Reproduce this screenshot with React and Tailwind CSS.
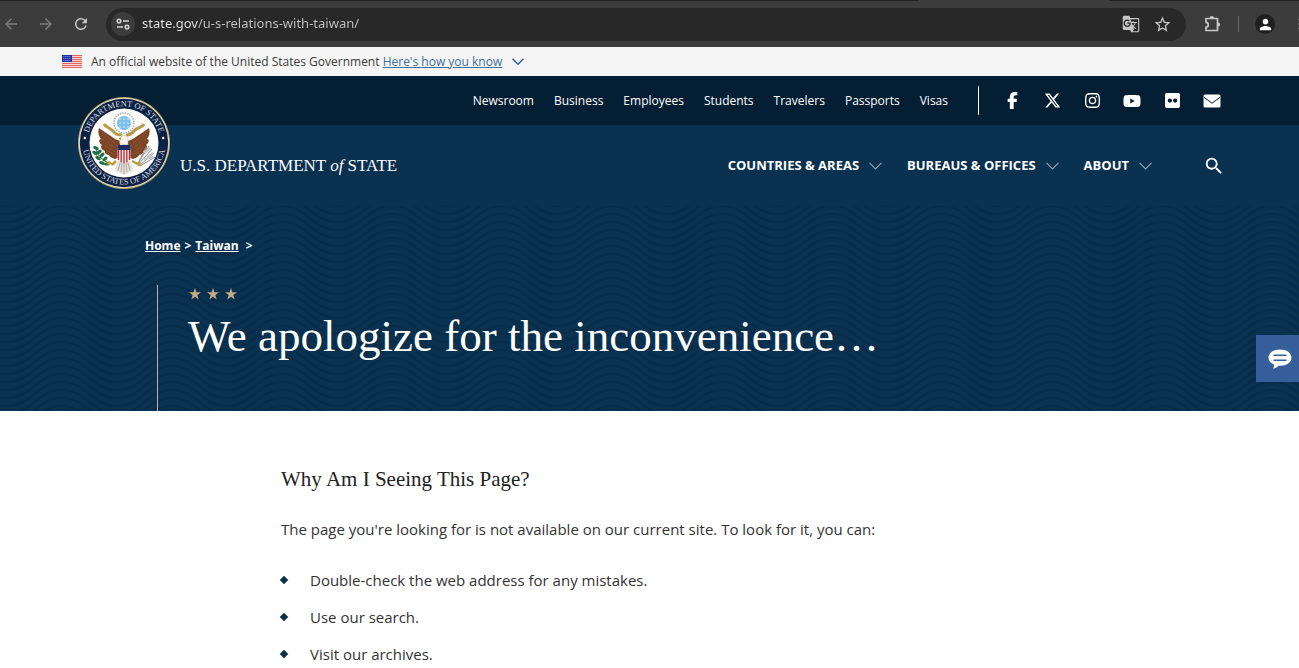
import { FaFacebookF, FaFlickr, FaInstagram, FaXTwitter, FaYoutube } from 'react-icons/fa6'
import {
  MdArrowBack,
  MdArrowForward,
  MdGTranslate,
  MdMoreVert,
  MdOutlineStarBorder,
  MdPerson,
  MdRefresh,
  MdSearch,
} from 'react-icons/md'

const TOP_LINKS = ['Newsroom', 'Business', 'Employees', 'Students', 'Travelers', 'Passports', 'Visas']

const SOCIAL_LINKS = [
  { name: 'Facebook', icon: <FaFacebookF size={17} /> },
  { name: 'X', icon: <FaXTwitter size={17} /> },
  { name: 'Instagram', icon: <FaInstagram size={17} /> },
  { name: 'YouTube', icon: <FaYoutube size={18} /> },
  { name: 'Flickr', icon: <FaFlickr size={17} /> },
  { name: 'Email', icon: <MailIcon /> },
]

const MAIN_MENU = ['Countries & Areas', 'Bureaus & Offices', 'About']

const TIPS = ['Double-check the web address for any mistakes.', 'Use our search.', 'Visit our archives.']

function MailIcon() {
  return (
    <svg width="18" height="14" viewBox="0 0 18 14" aria-hidden="true">
      <rect x="0.5" y="0.5" width="17" height="13" rx="1.5" fill="#fff" />
      <path d="M0.5 3 L9 9.2 L17.5 3" fill="none" stroke="#041e34" strokeWidth="1" />
    </svg>
  )
}

function Chevron({ className, width, height, strokeWidth }) {
  return (
    <svg
      className={className}
      width={width}
      height={height}
      viewBox="0 0 12 7"
      fill="none"
      stroke="currentColor"
      strokeWidth={strokeWidth}
      aria-hidden="true"
    >
      <path d="M0.5 0.7 L6 6.2 L11.5 0.7" />
    </svg>
  )
}

function StarIcon() {
  return (
    <svg width="12" height="12" viewBox="0 0 12 12" fill="currentColor" aria-hidden="true">
      <path d="M6 0 L7.4 4.3 H12 L8.3 7 L9.7 11.4 L6 8.7 L2.3 11.4 L3.7 7 L0 4.3 H4.6 Z" />
    </svg>
  )
}

function TuneIcon() {
  return (
    <svg width="14" height="14" viewBox="0 0 14 14" fill="none" stroke="#d6d6d6" strokeWidth="1.5" aria-hidden="true">
      <circle cx="3" cy="4" r="1.8" />
      <path d="M7 4 H13" />
      <circle cx="11" cy="10" r="1.8" />
      <path d="M1 10 H7" />
    </svg>
  )
}

function PuzzleIcon() {
  return (
    <svg width="20" height="18" viewBox="0 0 20 18" aria-hidden="true">
      <path
        d="M4 3.5 H15.5 V15.5 H4 V12 C7 12 7 7.3 4 7.3 Z"
        fill="none"
        stroke="currentColor"
        strokeWidth="1.7"
        strokeLinejoin="round"
      />
      <path d="M7.7 3.2 A2.1 2.1 0 0 1 11.9 3.2 Z M16 7.4 A2.1 2.1 0 0 1 16 11.7 Z" fill="currentColor" />
    </svg>
  )
}

function FlagIcon() {
  return (
    <svg width="20" height="13" viewBox="0 0 20 13" aria-hidden="true">
      <rect width="20" height="13" fill="#f6d9d4" />
      {[0, 2, 4, 6, 8, 10, 12].map((y) => (
        <rect key={y} y={y} width="20" height="1" fill="#e0665c" />
      ))}
      <rect width="10" height="7" fill="#1d33b0" />
      {[1, 3, 5].map((y) =>
        [1, 3, 5, 7].map((x) => <rect key={`${x}-${y}`} x={x + 0.5} y={y} width="0.8" height="0.8" fill="#c3cbf2" />),
      )}
    </svg>
  )
}

function Seal() {
  return (
    <svg width="92" height="92" viewBox="0 0 92 92" role="img" aria-label="Department of State seal">
      <defs>
        <path id="seal-top" d="M 9.5 46 A 36.5 36.5 0 0 1 82.5 46" />
        <path id="seal-bottom" d="M 4.5 46 A 41.5 41.5 0 0 0 87.5 46" />
      </defs>
      <circle cx="46" cy="46" r="46" fill="#b9ad72" />
      <circle cx="46" cy="46" r="45" fill="#f0ebcf" />
      <circle cx="46" cy="46" r="44.2" fill="#0d2143" />
      <circle cx="46" cy="46" r="34.5" fill="#fdfdfb" />
      <g fill="#d5d9e0" fontFamily="'Liberation Serif', serif" fontSize="8.4">
        <text textAnchor="middle">
          <textPath href="#seal-top" startOffset="50%">DEPARTMENT OF STATE</textPath>
        </text>
        <text textAnchor="middle">
          <textPath href="#seal-bottom" startOffset="50%">UNITED STATES OF AMERICA</textPath>
        </text>
      </g>
      <circle cx="6.8" cy="41" r="1.2" fill="#fff" />
      <circle cx="85.2" cy="41" r="1.2" fill="#fff" />

      {/* glory of clouds and stars */}
      <circle cx="46" cy="26" r="10" fill="#fff" stroke="#a9adb2" strokeWidth="1.6" strokeDasharray="1.5 1" />
      <circle cx="46" cy="26" r="7" fill="#79bfe6" />
      {[22, 26, 30].map((y) =>
        [42, 46, 50].map((x) => <circle key={`${x}-${y}`} cx={x} cy={y} r="0.8" fill="#e8f6ff" />),
      )}

      {/* ribbon */}
      <path
        d="M26 27 C28 31 34 31 37 36 C39 39 42 37 44 38 M66 27 C64 31 59 30 56 34 C53 38 50 38 48 38"
        fill="none"
        stroke="#b99a45"
        strokeWidth="3"
      />

      {/* wings */}
      <path
        d="M21 31 C26 35 32 38 37 42 L42 44 L42 60 L37 62 C33 61 31 59 31 58 C28 58 26 55 27 54 C23 53 22 49 24 48 C20 45 21 42 23 42 C20 38 20 34 21 31 Z"
        fill="#7c4525"
      />
      <path
        d="M71 31 C66 35 60 38 55 42 L50 44 L50 60 L55 62 C59 61 61 59 61 58 C64 58 66 55 65 54 C69 53 70 49 68 48 C72 45 71 42 69 42 C72 38 72 34 71 31 Z"
        fill="#7c4525"
      />
      <path
        d="M24 36 L37 46 M24 42 L36 50 M27 49 L36 54 M30 54 L37 58 M68 36 L55 46 M68 42 L56 50 M65 49 L56 54 M62 54 L55 58"
        stroke="#9a6236"
        strokeWidth="0.6"
      />

      {/* head */}
      <path d="M42 47 C41 43 42 40 44 39 C47 37 50 39 50 42 L50 48 Z" fill="#f7f5ee" stroke="#a8a397" strokeWidth="0.5" />
      <path d="M43 40 L40 42 L43 43 Z" fill="#d0a02c" />

      {/* tail and legs */}
      <path d="M38 64 L34 68 M54 64 L60 67" stroke="#c29a3c" strokeWidth="2.5" />
      <path d="M40 64 L52 64 L55 73 L50 76 L46 78 L42 76 L37 73 Z" fill="#e4e2dc" />
      <path d="M42 66 L40 74 M46 66 V77 M50 66 L52 74 M44 66 L43 75 M48 66 L49 75" stroke="#96928a" strokeWidth="0.7" />

      {/* shield */}
      <path d="M39.5 48 H52.5 V60 C52.5 64 49 66 46 67 C43 66 39.5 64 39.5 60 Z" fill="#f3e4e4" />
      <path d="M40.5 53 V63 M43.2 53 V65.5 M46 53 V66.5 M48.8 53 V65.5 M51.5 53 V63" stroke="#b42d3c" strokeWidth="1.3" />
      <rect x="39.5" y="48" width="13" height="5" fill="#1d2a66" />

      {/* olive branch */}
      <path d="M17 49 C19 57 23 64 34 67" fill="none" stroke="#2f6b3c" strokeWidth="1" />
      {[
        [18, 51, 20],
        [21, 55, -30],
        [17, 56, 30],
        [24, 58, -40],
        [20, 61, 30],
        [27, 62, -40],
        [24, 66, 20],
        [29, 67, 0],
      ].map(([x, y, angle]) => (
        <ellipse key={`${x}-${y}`} cx={x} cy={y} rx="3" ry="1.6" fill="#1f7040" transform={`rotate(${angle} ${x} ${y})`} />
      ))}

      {/* arrows */}
      <path
        d="M59 68 L71 49 M60 68 L74 52 M61 69 L76 56 M62 69 L77 60 M60 67 L68 50"
        stroke="#8f9092"
        strokeWidth="1"
      />
      <path d="M67 56 L72 51 M69 60 L75 56 M66 62 L76 60" stroke="#c5c6c7" strokeWidth="2" />
      <circle cx="31" cy="66" r="2" fill="#c99f38" />
      <circle cx="61" cy="67" r="2" fill="#c99f38" />
    </svg>
  )
}

function WavePattern() {
  return (
    <svg className="absolute inset-0 h-full w-full" aria-hidden="true">
      <defs>
        <pattern id="waves" x="7" width="110" height="8" patternUnits="userSpaceOnUse">
          {[-32, -24, -16, -8, 0, 8].map((y) => (
            <path
              key={y}
              d={`M-55 ${y} C-30 ${y} -25 ${y + 24} 0 ${y + 24} C25 ${y + 24} 30 ${y} 55 ${y} C80 ${y} 85 ${y + 24} 110 ${y + 24} C135 ${y + 24} 140 ${y} 165 ${y}`}
              fill="none"
              stroke="#062a46"
              strokeWidth="2"
            />
          ))}
        </pattern>
      </defs>
      <rect width="100%" height="100%" fill="url(#waves)" opacity="0.6" />
    </svg>
  )
}

function BrowserBar() {
  return (
    <div className="bg-[#3c3c3c] text-[#c7c7c7]">
      {/* bottom edge of the tab strip */}
      <div className="flex h-px justify-end bg-[#232323] pr-[190px]">
        <div className="w-[190px] bg-[#3c3c3c]" />
      </div>
      <div className="flex h-[46px] items-center">
        <div className="flex w-[106px] shrink-0 items-center gap-[17px] pl-[2px]">
          <button type="button" aria-label="Back" className="text-[#7c7c7c]">
            <MdArrowBack size={18} />
          </button>
          <button type="button" aria-label="Forward" className="text-[#7c7c7c]">
            <MdArrowForward size={18} />
          </button>
          <button type="button" aria-label="Reload">
            <MdRefresh size={18} />
          </button>
        </div>
        <div className="flex h-[33px] grow items-center rounded-full bg-[#282828] pr-[14px] pl-[5px]">
          <button
            type="button"
            aria-label="View site information"
            className="flex h-6 w-6 shrink-0 items-center justify-center rounded-full bg-[#3c3c3c]"
          >
            <TuneIcon />
          </button>
          <input
            type="text"
            aria-label="Address"
            defaultValue="state.gov/u-s-relations-with-taiwan/"
            className="ml-[7px] min-w-0 grow bg-[linear-gradient(to_right,#ececec_56px,#c4c4c4_56px)] bg-clip-text font-['Noto_Sans',sans-serif] text-[13px] text-transparent caret-white outline-none"
          />
          <button type="button" aria-label="Translate this page" className="mr-[13px]">
            <MdGTranslate size={18} />
          </button>
          <button type="button" aria-label="Bookmark this page">
            <MdOutlineStarBorder size={19} />
          </button>
        </div>
        <div className="flex shrink-0 items-center pl-4">
          <button type="button" aria-label="Extensions">
            <PuzzleIcon />
          </button>
          <span className="ml-4 h-4 w-px bg-[#6a6a6a]" />
          <button
            type="button"
            aria-label="Profile"
            className="ml-4 flex h-5 w-5 items-center justify-center rounded-full bg-[#1f1f1f] text-white"
          >
            <MdPerson size={17} />
          </button>
          <button type="button" aria-label="Browser menu" className="ml-4 w-[8px] overflow-hidden">
            <MdMoreVert size={18} className="max-w-none" />
          </button>
        </div>
      </div>
    </div>
  )
}

function GovBanner() {
  return (
    <div className="flex h-[29px] items-center bg-[#f5f5f5] pl-[62px] text-xs text-[#3b3b3b]">
      <FlagIcon />
      <p className="ml-[9px]">
        An official website of the United States Government{' '}
        <a href="#how-you-know" className="text-[#3f6f97] underline">
          Here's how you know
        </a>
      </p>
      <Chevron className="ml-[10px] text-[#2f6190]" width={12} height={7} strokeWidth={1.5} />
    </div>
  )
}

function Header() {
  return (
    <header className="relative text-white">
      <div className="flex h-[49px] items-center justify-end bg-[#041e34] pr-[78px]">
        <nav aria-label="Audience" className="flex gap-5 text-xs font-medium">
          {TOP_LINKS.map((link) => (
            <a key={link} href="#top">
              {link}
            </a>
          ))}
        </nav>
        <div className="ml-[30px] flex h-[29px] items-center gap-[22px] border-l border-white pl-6">
          {SOCIAL_LINKS.map(({ name, icon }) => (
            <a key={name} href="#social" aria-label={name} className="flex w-[18px] justify-center">
              {icon}
            </a>
          ))}
        </div>
      </div>
      <div className="flex h-[81px] items-center justify-between bg-[#0a3150] pr-[74px] pl-[180px]">
        <a href="#home" className="font-['Liberation_Serif',serif] text-[17px]">
          U.S. DEPARTMENT <em>of</em> STATE
        </a>
        <nav aria-label="Main" className="flex items-center text-[13px] font-bold">
          {MAIN_MENU.map((item) => (
            <button key={item} type="button" className="mr-[25px] flex items-center gap-[10px] uppercase">
              {item}
              <Chevron className="text-[#8fa5b8]" width={13} height={8} strokeWidth={1} />
            </button>
          ))}
          <button type="button" aria-label="Search" className="ml-[26px]">
            <MdSearch size={22} />
          </button>
        </nav>
      </div>
      <a href="#home" className="absolute top-[21px] left-[78px]">
        <Seal />
      </a>
    </header>
  )
}

function Hero() {
  return (
    <section className="relative bg-[#0a3150] text-white">
      <WavePattern />
      <div className="relative px-[145px] pt-8">
        <nav aria-label="Breadcrumb" className="flex gap-[4px] text-xs leading-4 font-bold">
          <a href="#home" className="underline">
            Home
          </a>
          <span>&gt;</span>
          <a href="#taiwan" className="mr-[3px] underline">
            Taiwan
          </a>
          <span>&gt;</span>
        </nav>
        <div className="mt-[31px] ml-3 h-[126px] border-l border-[#b9b5a4] pl-[30px]">
          <div className="flex gap-[6px] pt-[3px] pl-px text-[#c5ab86]">
            <StarIcon />
            <StarIcon />
            <StarIcon />
          </div>
          <h1 className="mt-2 font-['Liberation_Serif',serif] text-[45px] leading-[56px]">
            We apologize for the inconvenience…
          </h1>
        </div>
      </div>
    </section>
  )
}

function ChatButton() {
  return (
    <button
      type="button"
      aria-label="Open chat"
      className="fixed top-[335px] right-0 flex h-[47px] w-[43px] items-center justify-center bg-[#355e9b] pl-1"
    >
      <svg width="24" height="20" viewBox="0 0 24 20" aria-hidden="true">
        <path
          d="M12 0.5 C18.5 0.5 23.5 4 23.5 8.8 C23.5 13.5 18.5 16.8 12 16.8 L10.5 16.7 C9 18.3 7.2 19.2 5 19.8 C5.8 18.6 6.1 17 6 15.6 C2.6 14.2 0.5 11.8 0.5 8.8 C0.5 4 5.5 0.5 12 0.5 Z"
          fill="#fff"
        />
        <path d="M5.5 6.3 H18.5 M5.5 11.3 H18.5" stroke="#355e9b" strokeWidth="1.6" />
      </svg>
    </button>
  )
}

function Content() {
  return (
    <main className="bg-white px-[281px] pt-[52px] text-[15px] leading-6 text-[#333]">
      <h2 className="font-['Liberation_Serif',serif] text-[21px] leading-8 text-[#222]">Why Am I Seeing This Page?</h2>
      <p className="mt-[22px]">
        The page you're looking for is not available on our current site. To look for it, you can:
      </p>
      <ul className="mt-[27px] flex flex-col gap-[13px]">
        {TIPS.map((tip) => (
          <li key={tip} className="flex items-center">
            <span className="h-[6px] w-[6px] rotate-45 bg-[#0a2f4d]" />
            <span className="ml-[23px]">{tip}</span>
          </li>
        ))}
      </ul>
    </main>
  )
}

export default function App() {
  return (
    <div className="h-screen overflow-hidden bg-white font-['Open_Sans',sans-serif]">
      <BrowserBar />
      <GovBanner />
      <Header />
      <Hero />
      <Content />
      <ChatButton />
    </div>
  )
}
